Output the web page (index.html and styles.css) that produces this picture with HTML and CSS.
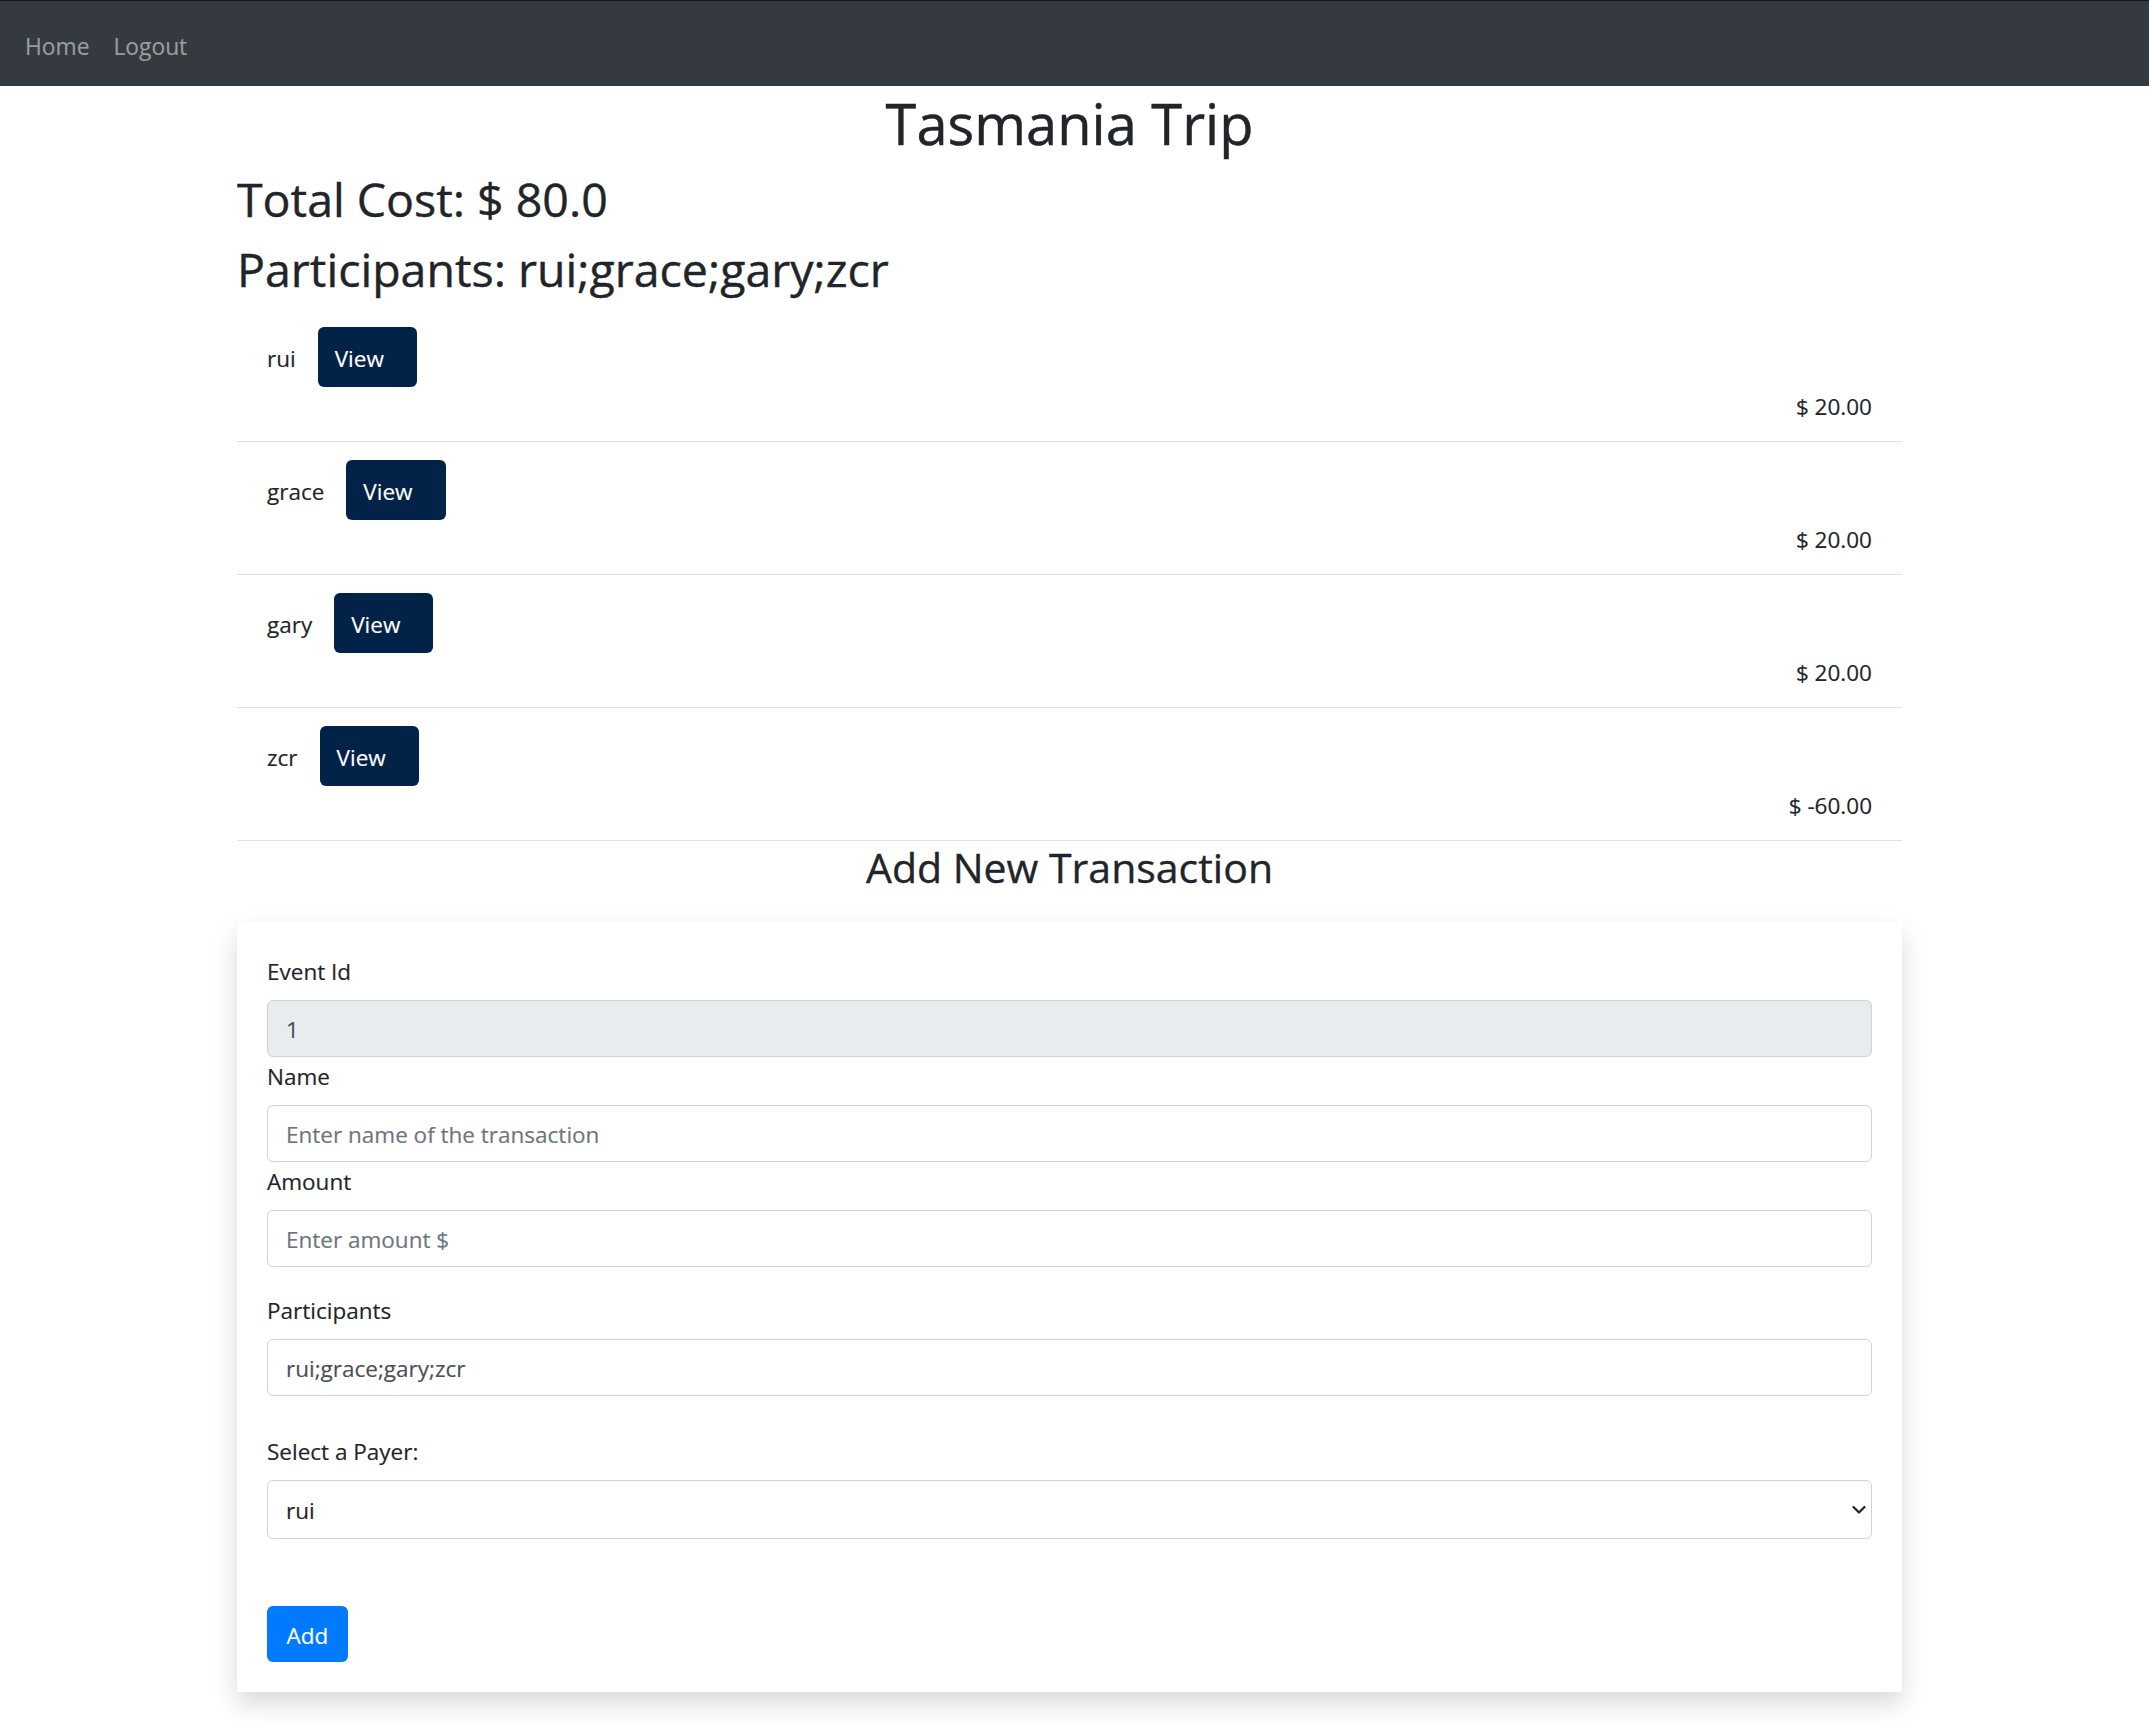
FILE: index.html
```html
<!DOCTYPE html>
<html lang="en">
<head>
<meta charset="utf-8">
<title>Tasmania Trip</title>
<link rel="stylesheet" href="styles.css">
</head>
<body>
<nav class="navbar">
  <a class="nav-link" href="#">Home</a>
  <a class="nav-link" href="#">Logout</a>
</nav>
<div class="page">
  <main class="container">
    <h1 class="title">Tasmania Trip</h1>
    <h2 class="summary">Total Cost: $ 80.0</h2>
    <h2 class="summary">Participants: rui;grace;gary;zcr</h2>
    <ul class="balances">
      <li class="balance-row">
        <div class="who"><span class="name">rui</span><button class="btn-view" type="button">View</button></div>
        <div class="amount">$ 20.00</div>
      </li>
      <li class="balance-row">
        <div class="who"><span class="name">grace</span><button class="btn-view" type="button">View</button></div>
        <div class="amount">$ 20.00</div>
      </li>
      <li class="balance-row">
        <div class="who"><span class="name">gary</span><button class="btn-view" type="button">View</button></div>
        <div class="amount">$ 20.00</div>
      </li>
      <li class="balance-row">
        <div class="who"><span class="name">zcr</span><button class="btn-view" type="button">View</button></div>
        <div class="amount">$ -60.00</div>
      </li>
    </ul>
    <h3 class="section-title">Add New Transaction</h3>
    <form class="card">
      <label class="field-label" for="eventId">Event Id</label>
      <input class="form-control is-readonly" id="eventId" type="text" value="1" readonly>
      <label class="field-label" for="tname">Name</label>
      <input class="form-control" id="tname" type="text" placeholder="Enter name of the transaction">
      <label class="field-label" for="amount">Amount</label>
      <input class="form-control group-end" id="amount" type="text" placeholder="Enter amount $">
      <label class="field-label" for="parts">Participants</label>
      <input class="form-control group-end-lg" id="parts" type="text" value="rui;grace;gary;zcr">
      <label class="field-label" for="payer">Select a Payer:</label>
      <div class="select-wrap">
        <select class="form-select" id="payer">
          <option>rui</option>
          <option>grace</option>
          <option>gary</option>
          <option>zcr</option>
        </select>
        <svg class="chevron" width="14" height="9" viewBox="0 0 14 9" aria-hidden="true"><polyline points="1.5,1.5 7,7 12.5,1.5" fill="none" stroke="#222" stroke-width="2.2" stroke-linecap="round" stroke-linejoin="round"/></svg>
      </div>
      <button class="btn-add" type="button">Add</button>
    </form>
  </main>
</div>
</body>
</html>
```

FILE: styles.css
```css
html, body {
  margin: 0;
  padding: 0;
}

body {
  font-family: "Open Sans", "Noto Sans", sans-serif;
  font-size: 22.5px;
  line-height: 36px;
  color: #212529;
  background: #ffffff;
  -webkit-text-stroke: 0.15px currentColor;
}

.navbar {
  height: 86px;
  box-sizing: border-box;
  border-top: 1px solid #15181b;
  background: #343a40;
  display: flex;
  align-items: center;
  padding: 6px 0 0 13px;
}

.nav-link {
  color: #9a9da0;
  text-decoration: none;
  padding: 0 12px;
  font-size: 22.8px;
  line-height: 36px;
}

.page {
  padding-right: 10px;
  padding-bottom: 40px;
}

.container {
  width: 1665px;
  margin: 0 auto;
}

.title {
  margin: 0 0 11px;
  padding-top: 1px;
  font-size: 56px;
  line-height: 72px;
  font-weight: 400;
  text-align: center;
  -webkit-text-stroke: 0.45px currentColor;
}

.summary {
  margin: 0 0 11px;
  padding-top: 1px;
  font-size: 46.5px;
  line-height: 57.6px;
  font-weight: 400;
  -webkit-text-stroke: 0.4px currentColor;
}

.balances {
  list-style: none;
  margin: 0;
  padding: 0;
}

.balance-row {
  padding: 18px 30px;
  border-bottom: 1px solid #dee2e6;
}

.who {
  display: flex;
  align-items: center;
  height: 60px;
}

.name {
  padding-top: 3px;
}

.btn-view {
  margin-left: 22px;
  height: 60px;
  padding: 3px 33px 0 17px;
  border: 0;
  border-radius: 6px;
  background: #022248;
  color: #ffffff;
  font: inherit;
  cursor: pointer;
}

.amount {
  padding-top: 3px;
  line-height: 33px;
  text-align: right;
}

.section-title {
  margin: 0;
  padding-top: 3px;
  font-size: 41px;
  line-height: 47px;
  font-weight: 400;
  text-align: center;
  -webkit-text-stroke: 0.35px currentColor;
}

.card {
  margin: 31px 0 0;
  padding: 30px;
  background: #ffffff;
  box-shadow: 0 12px 24px rgba(0, 0, 0, 0.15);
}

.field-label {
  display: block;
  padding-top: 2px;
  margin-bottom: 10px;
}

.form-control,
.form-select {
  display: block;
  width: 100%;
  box-sizing: border-box;
  height: 57px;
  margin: 0;
  padding: 2px 18px 0;
  border: 1px solid #ced4da;
  border-radius: 6px;
  font: inherit;
  color: #495057;
  background: #ffffff;
}

.form-control::placeholder {
  color: #6c757d;
  opacity: 1;
}

.is-readonly {
  background: #e9ecef;
}

.group-end {
  margin-bottom: 24px;
}

.group-end-lg {
  margin-bottom: 36px;
}

.select-wrap {
  position: relative;
  margin-bottom: 67px;
}

.form-select {
  height: 59px;
  color: #212529;
  -webkit-appearance: none;
  appearance: none;
}

.chevron {
  position: absolute;
  right: 6px;
  top: 50%;
  transform: translateY(-50%);
  pointer-events: none;
}

.btn-add {
  display: block;
  height: 56px;
  padding: 3px 19.5px 0;
  border: 0;
  border-radius: 6px;
  background: #007bff;
  color: #ffffff;
  font: inherit;
  cursor: pointer;
}
```
